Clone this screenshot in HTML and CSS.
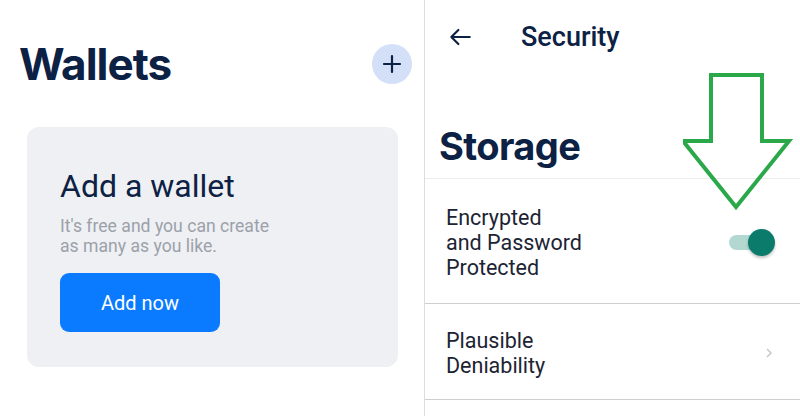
FILE: index.html
```html
<!DOCTYPE html>
<html lang="en">
<head>
    <meta charset="UTF-8">
    <meta name="viewport" content="width=device-width, initial-scale=1.0">
    <title>Wallets and Security</title>
    <link rel="stylesheet" href="styles.css">
</head>
<body>
    <div class="screens">
        <div class="wallets">
            <div class="wallets-header">
                <h1 class="big-title">Wallets</h1>
                <button class="add-circle" aria-label="Add">
                    <svg width="20" height="20" viewBox="0 0 20 20">
                        <path d="M10 2v16M2 10h16" stroke="#0c2144" stroke-width="2.2" stroke-linecap="round"/>
                    </svg>
                </button>
            </div>
            <div class="add-card">
                <h2>Add a wallet</h2>
                <p>It's free and you can create<br>as many as you like.</p>
                <button class="add-now">Add now</button>
            </div>
        </div>

        <div class="security">
            <div class="topbar">
                <svg class="back" width="26" height="26" viewBox="0 0 24 24">
                    <path d="M21 12H4M10.5 5.5L4 12l6.5 6.5" fill="none" stroke="#0c2144" stroke-width="2" stroke-linecap="round" stroke-linejoin="round"/>
                </svg>
                <span class="topbar-title">Security</span>
            </div>
            <h1 class="big-title storage">Storage</h1>
            <div class="list">
                <div class="row">
                    <span>Encrypted<br>and Password<br>Protected</span>
                    <div class="toggle on"><div class="knob"></div></div>
                </div>
                <div class="row">
                    <span>Plausible<br>Deniability</span>
                    <svg class="chevron" width="10" height="14" viewBox="0 0 10 14">
                        <path d="M3 3l4 4-4 4" fill="none" stroke="#c4c7cc" stroke-width="1.5"/>
                    </svg>
                </div>
            </div>

            <svg class="hint-arrow" width="112" height="140" viewBox="0 0 112 140">
                <path d="M28 3H79V69H106L53 135L0 69H28Z" fill="none" stroke="#2aa84a" stroke-width="4" stroke-linejoin="miter"/>
            </svg>
        </div>
    </div>
</body>
</html>
```

FILE: styles.css
```css
body {
    margin: 0;
    background: #fff;
    font-family: Roboto, "Liberation Sans", sans-serif;
    color: #0c2144;
}

.screens {
    display: flex;
    height: 416px;
    overflow: hidden;
}

.wallets {
    width: 425px;
    border-right: 1px solid #dcdcdc;
    padding: 0 12px 0 19px;
    box-sizing: border-box;
}

.wallets-header {
    display: flex;
    align-items: center;
    justify-content: space-between;
    height: 90px;
    padding-top: 38px;
    box-sizing: border-box;
}

.big-title {
    font-family: Inter, "Liberation Sans", sans-serif;
    font-weight: 700;
    font-size: 44px;
    letter-spacing: -1px;
    margin: 0;
    color: #0c2144;
}

.add-circle {
    width: 40px;
    height: 40px;
    border-radius: 50%;
    border: none;
    background: #d3e0f7;
    display: flex;
    align-items: center;
    justify-content: center;
    padding: 0;
}

.add-card {
    margin: 37px 0 0 8px;
    width: 371px;
    height: 240px;
    background: #eef0f4;
    border-radius: 12px;
    padding: 40px 33px 0;
    box-sizing: border-box;
}

.add-card h2 {
    margin: 0;
    font-weight: 400;
    font-size: 32px;
    line-height: 38px;
    color: #0c2144;
}

.add-card p {
    margin: 11px 0 17px;
    font-size: 17.6px;
    line-height: 20px;
    color: #9ca1a9;
}

.add-now {
    width: 160px;
    height: 59px;
    border: none;
    border-radius: 9px;
    background: #0a7bff;
    color: #fff;
    font-family: Roboto, sans-serif;
    font-size: 20px;
}

.security {
    flex: 1;
    position: relative;
}

.topbar {
    display: flex;
    align-items: center;
    height: 74px;
    padding-left: 22px;
}

.back {
    margin-right: 48px;
}

.topbar-title {
    font-size: 27px;
    font-weight: 500;
}

.big-title.storage {
    font-size: 38px;
    letter-spacing: -0.6px;
    padding: 51px 0 11px 14px;
    line-height: 42px;
    border-bottom: 1px solid #ececec;
}

.row {
    display: flex;
    align-items: center;
    justify-content: space-between;
    padding: 0 29px 0 21px;
    border-bottom: 1px solid #cfcfcf;
    font-size: 21.5px;
    line-height: 25px;
    color: #1c2433;
}

.row:first-child {
    height: 125px;
    padding-top: 2px;
    box-sizing: border-box;
}

.row:nth-child(2) {
    height: 96px;
    padding-top: 2px;
    box-sizing: border-box;
}

.toggle {
    width: 42px;
    height: 15px;
    border-radius: 8px;
    background: #b3d8d2;
    position: relative;
}

.knob {
    position: absolute;
    right: -4px;
    top: -6px;
    width: 27px;
    height: 27px;
    border-radius: 50%;
    background: #0b7b6c;
    box-shadow: 0 2px 3px rgba(0, 0, 0, 0.25);
}

.chevron {
    margin-right: -3px;
}

.hint-arrow {
    position: absolute;
    left: 258px;
    top: 72px;
}
```
